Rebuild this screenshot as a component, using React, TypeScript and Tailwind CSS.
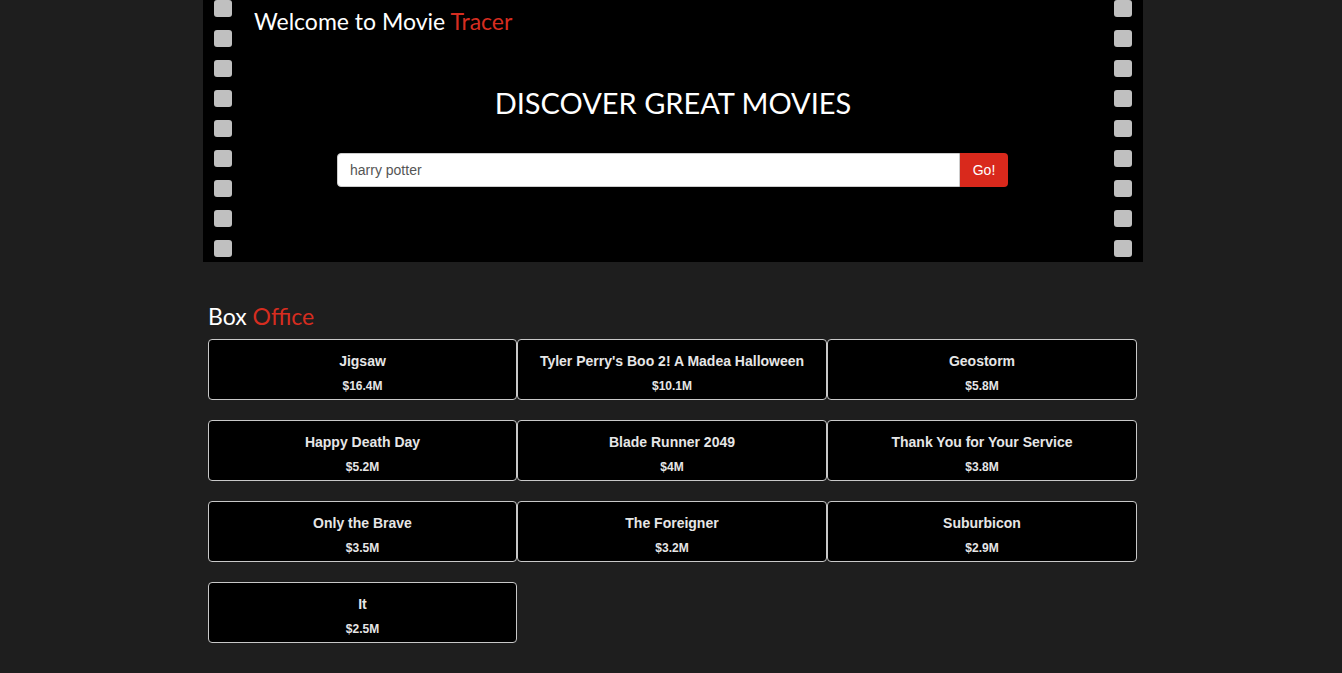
import React from "react";

const movies = [
  { t: "Jigsaw", g: "$16.4M" },
  { t: "Tyler Perry's Boo 2! A Madea Halloween", g: "$10.1M" },
  { t: "Geostorm", g: "$5.8M" },
  { t: "Happy Death Day", g: "$5.2M" },
  { t: "Blade Runner 2049", g: "$4M" },
  { t: "Thank You for Your Service", g: "$3.8M" },
  { t: "Only the Brave", g: "$3.5M" },
  { t: "The Foreigner", g: "$3.2M" },
  { t: "Suburbicon", g: "$2.9M" },
  { t: "It", g: "$2.5M" },
];

function Holes() {
  return (
    <div className="flex flex-col gap-[13px] w-[18px]">
      {Array.from({ length: 9 }).map((_, i) => (
        <div key={i} className="w-[18px] h-[17px] rounded-[3px] bg-[#c0c0c0]" />
      ))}
    </div>
  );
}

export default function App() {
  return (
    <div className="min-h-screen bg-[#1e1e1e] font-['Liberation_Sans',Arial,sans-serif]">
      <div className="ml-[203px] w-[940px]">
        <header className="h-[262px] bg-black flex px-[11px]">
          <Holes />
          <div className="flex-1 flex flex-col">
            <h2 className="pl-[22px] pt-[5px] text-[23px] leading-[32px] text-white font-['Lato',sans-serif]">
              Welcome to Movie <span className="text-[#d62d20]">Tracer</span>
            </h2>
            <h1 className="mt-[48px] text-center text-[29px] leading-[36px] text-white font-['Lato',sans-serif]">
              DISCOVER GREAT MOVIES
            </h1>
            <div className="mt-[32px] ml-[105px] w-[671px] flex h-[34px]">
              <input
                defaultValue="harry potter"
                className="flex-1 h-full bg-white rounded-l-[4px] border border-[#ccc] px-[12px] text-[14px] text-[#555] outline-none font-['Liberation_Sans',Arial,sans-serif]"
              />
              <button className="w-[48px] h-full bg-[#d9291c] text-white text-[14px] rounded-r-[4px] font-['Liberation_Sans',Arial,sans-serif]">
                Go!
              </button>
            </div>
          </div>
          <Holes />
        </header>
        <section className="px-[5px] pt-[40px]">
          <h3 className="text-[23px] leading-[28px] text-white font-['Lato',sans-serif]">
            Box <span className="text-[#d62d20]">Office</span>
          </h3>
          <div className="mt-[9px] grid grid-cols-[309px_310px_310px] gap-y-[20px]">
            {movies.map((m) => (
              <div
                key={m.t}
                className="h-[61px] bg-black border border-[#c8c8c8] rounded-[4px] flex flex-col items-center text-[#e6e6e6] font-bold"
              >
                <div className="mt-[12px] text-[14px] leading-[18px]">{m.t}</div>
                <div className="mt-[8px] text-[12px] leading-[16px]">{m.g}</div>
              </div>
            ))}
          </div>
        </section>
      </div>
    </div>
  );
}
